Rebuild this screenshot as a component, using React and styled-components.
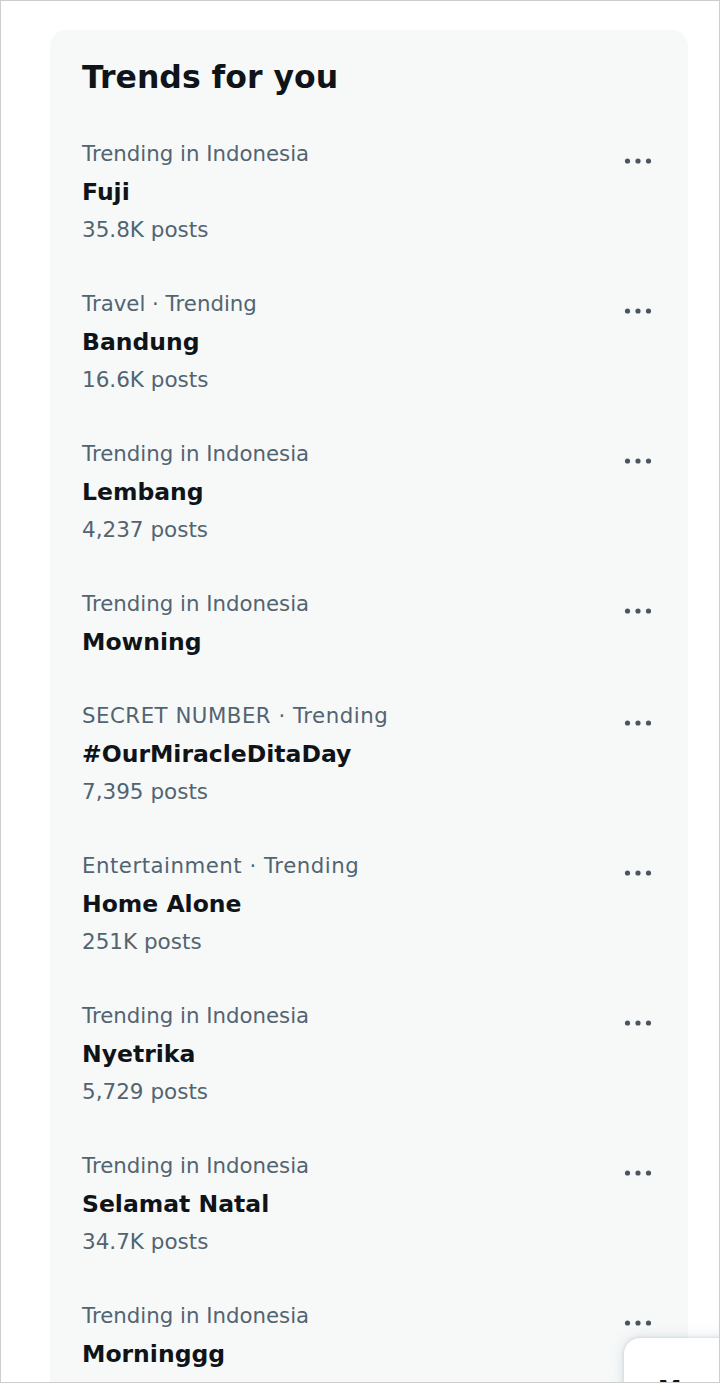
import React from "react";
import styled, { createGlobalStyle } from "styled-components";

const Global = createGlobalStyle`
  html, body { margin: 0; padding: 0; background: #ffffff; }
  body { font-family: "DejaVu Sans", "Liberation Sans", sans-serif; }
  * { box-sizing: border-box; }
`;

const Frame = styled.div`
  position: relative;
  width: 720px;
  height: 1383px;
  border: 1px solid #cdcdcd;
  background: #ffffff;
  overflow: hidden;
  padding: 29px 0 0 49px;
`;

const Card = styled.section`
  width: 638px;
  background: #f7f9f9;
  border-radius: 16px;
  padding-bottom: 40px;
`;

const Title = styled.h2`
  margin: 0;
  padding: 27px 32px 22px;
  font-size: 31.5px;
  line-height: 40px;
  font-weight: 700;
  color: #0f1419;
`;

const Row = styled.div`
  display: flex;
  align-items: flex-start;
  justify-content: space-between;
  padding: 16px 30px 20px 32px;
`;

const Info = styled.div`
  display: flex;
  flex-direction: column;
`;

const Meta = styled.div`
  font-size: 21.3px;
  line-height: 38px;
  color: #536471;
  white-space: nowrap;
  letter-spacing: ${(p) => (p.$wide ? "0.5px" : "0")};
`;

const Name = styled.div`
  font-size: 23.5px;
  line-height: 38px;
  font-weight: 700;
  color: #0f1419;
  white-space: nowrap;
`;

const Posts = styled.div`
  font-size: 21.5px;
  line-height: 38px;
  color: #536471;
  white-space: nowrap;
`;

const More = styled.button`
  width: 40px;
  height: 40px;
  margin-top: 6px;
  border: none;
  background: transparent;
  padding: 0;
  display: flex;
  align-items: center;
  justify-content: center;
  flex-shrink: 0;
`;

const Drawer = styled.div`
  position: absolute;
  left: 623px;
  top: 1337px;
  width: 420px;
  height: 200px;
  background: #ffffff;
  border-radius: 16px;
  box-shadow: rgba(101, 119, 134, 0.2) 0 0 15px, rgba(101, 119, 134, 0.15) 0 0 3px 1px;
  padding: 37px 0 0 34px;
`;

const DrawerTitle = styled.div`
  font-size: 23.5px;
  line-height: 28px;
  font-weight: 700;
  color: #0f1419;
`;

const Dots = () => (
  <svg width="30" height="8" viewBox="0 0 30 8" aria-hidden="true">
    <circle cx="4.5" cy="4" r="2.6" fill="#4b5560" />
    <circle cx="15" cy="4" r="2.6" fill="#4b5560" />
    <circle cx="25.5" cy="4" r="2.6" fill="#4b5560" />
  </svg>
);

const trends = [
  { meta: "Trending in Indonesia", name: "Fuji", posts: "35.8K posts" },
  { meta: "Travel · Trending", name: "Bandung", posts: "16.6K posts" },
  { meta: "Trending in Indonesia", name: "Lembang", posts: "4,237 posts" },
  { meta: "Trending in Indonesia", name: "Mowning" },
  { meta: "SECRET NUMBER · Trending", name: "#OurMiracleDitaDay", posts: "7,395 posts", wide: true },
  { meta: "Entertainment · Trending", name: "Home Alone", posts: "251K posts", wide: true },
  { meta: "Trending in Indonesia", name: "Nyetrika", posts: "5,729 posts" },
  { meta: "Trending in Indonesia", name: "Selamat Natal", posts: "34.7K posts" },
  { meta: "Trending in Indonesia", name: "Morninggg" },
];

export default function App() {
  return (
    <>
      <Global />
      <Frame>
        <Card>
          <Title>Trends for you</Title>
          {trends.map((t, i) => (
            <Row key={i}>
              <Info>
                <Meta $wide={t.wide}>{t.meta}</Meta>
                <Name>{t.name}</Name>
                {t.posts && <Posts>{t.posts}</Posts>}
              </Info>
              <More aria-label="More">
                <Dots />
              </More>
            </Row>
          ))}
        </Card>
        <Drawer>
          <DrawerTitle>Messages</DrawerTitle>
        </Drawer>
      </Frame>
    </>
  );
}
